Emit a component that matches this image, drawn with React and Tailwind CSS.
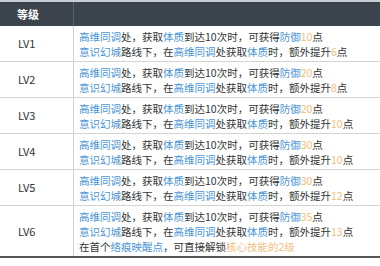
import React from "react";

const B = ({ children }) => <span className="text-[#4a95d6]">{children}</span>;
const O = ({ children }) => <span className="text-[#f2bd7a]">{children}</span>;

const rows = [
  { lv: "LV1", def: "10", extra: "6" },
  { lv: "LV2", def: "20", extra: "8" },
  { lv: "LV3", def: "20", extra: "10" },
  { lv: "LV4", def: "30", extra: "10" },
  { lv: "LV5", def: "30", extra: "12" },
  { lv: "LV6", def: "35", extra: "13", last: true },
];

export default function App() {
  return (
    <div
      className="w-[380px] h-[266px] bg-white text-[#333] overflow-hidden"
      style={{ fontFamily: '"Noto Sans CJK SC", "Noto Sans", sans-serif' }}
    >
      <div className="border-t-[2px] border-[#c9ccd0]">
        <div className="flex h-[24px] bg-[#3b434c] text-white">
          <div className="w-[74px] border-r border-[#5a6169] pl-[17px] flex items-center text-[11px] font-bold">
            等级
          </div>
          <div className="flex-1" />
        </div>
        {rows.map((r) => (
          <div key={r.lv} className={"flex " + (r.last ? "border-b-[2px] border-[#555]" : "border-b border-[#d4d4d4]")}>
            <div className="w-[74px] border-r border-[#d4d4d4] pl-[18px] flex items-center text-[11px]">
              {r.lv}
            </div>
            <div className="flex-1 pl-[5px] pt-[3px] pb-[2px] text-[10.5px] leading-[15px] whitespace-nowrap">
              <div>
                <B>高维同调</B>处，获取<B>体质</B>到达10次时，可获得<B>防御</B>
                <O>{r.def}</O>点
              </div>
              <div>
                <B>意识幻城</B>路线下，在<B>高维同调</B>处获取<B>体质</B>时，额外提升
                <O>{r.extra}</O>点
              </div>
              {r.last && (
                <div>
                  在首个<B>络痕映醒点</B>，可直接解锁<O>核心技能的2级</O>
                </div>
              )}
            </div>
          </div>
        ))}
      </div>
    </div>
  );
}
